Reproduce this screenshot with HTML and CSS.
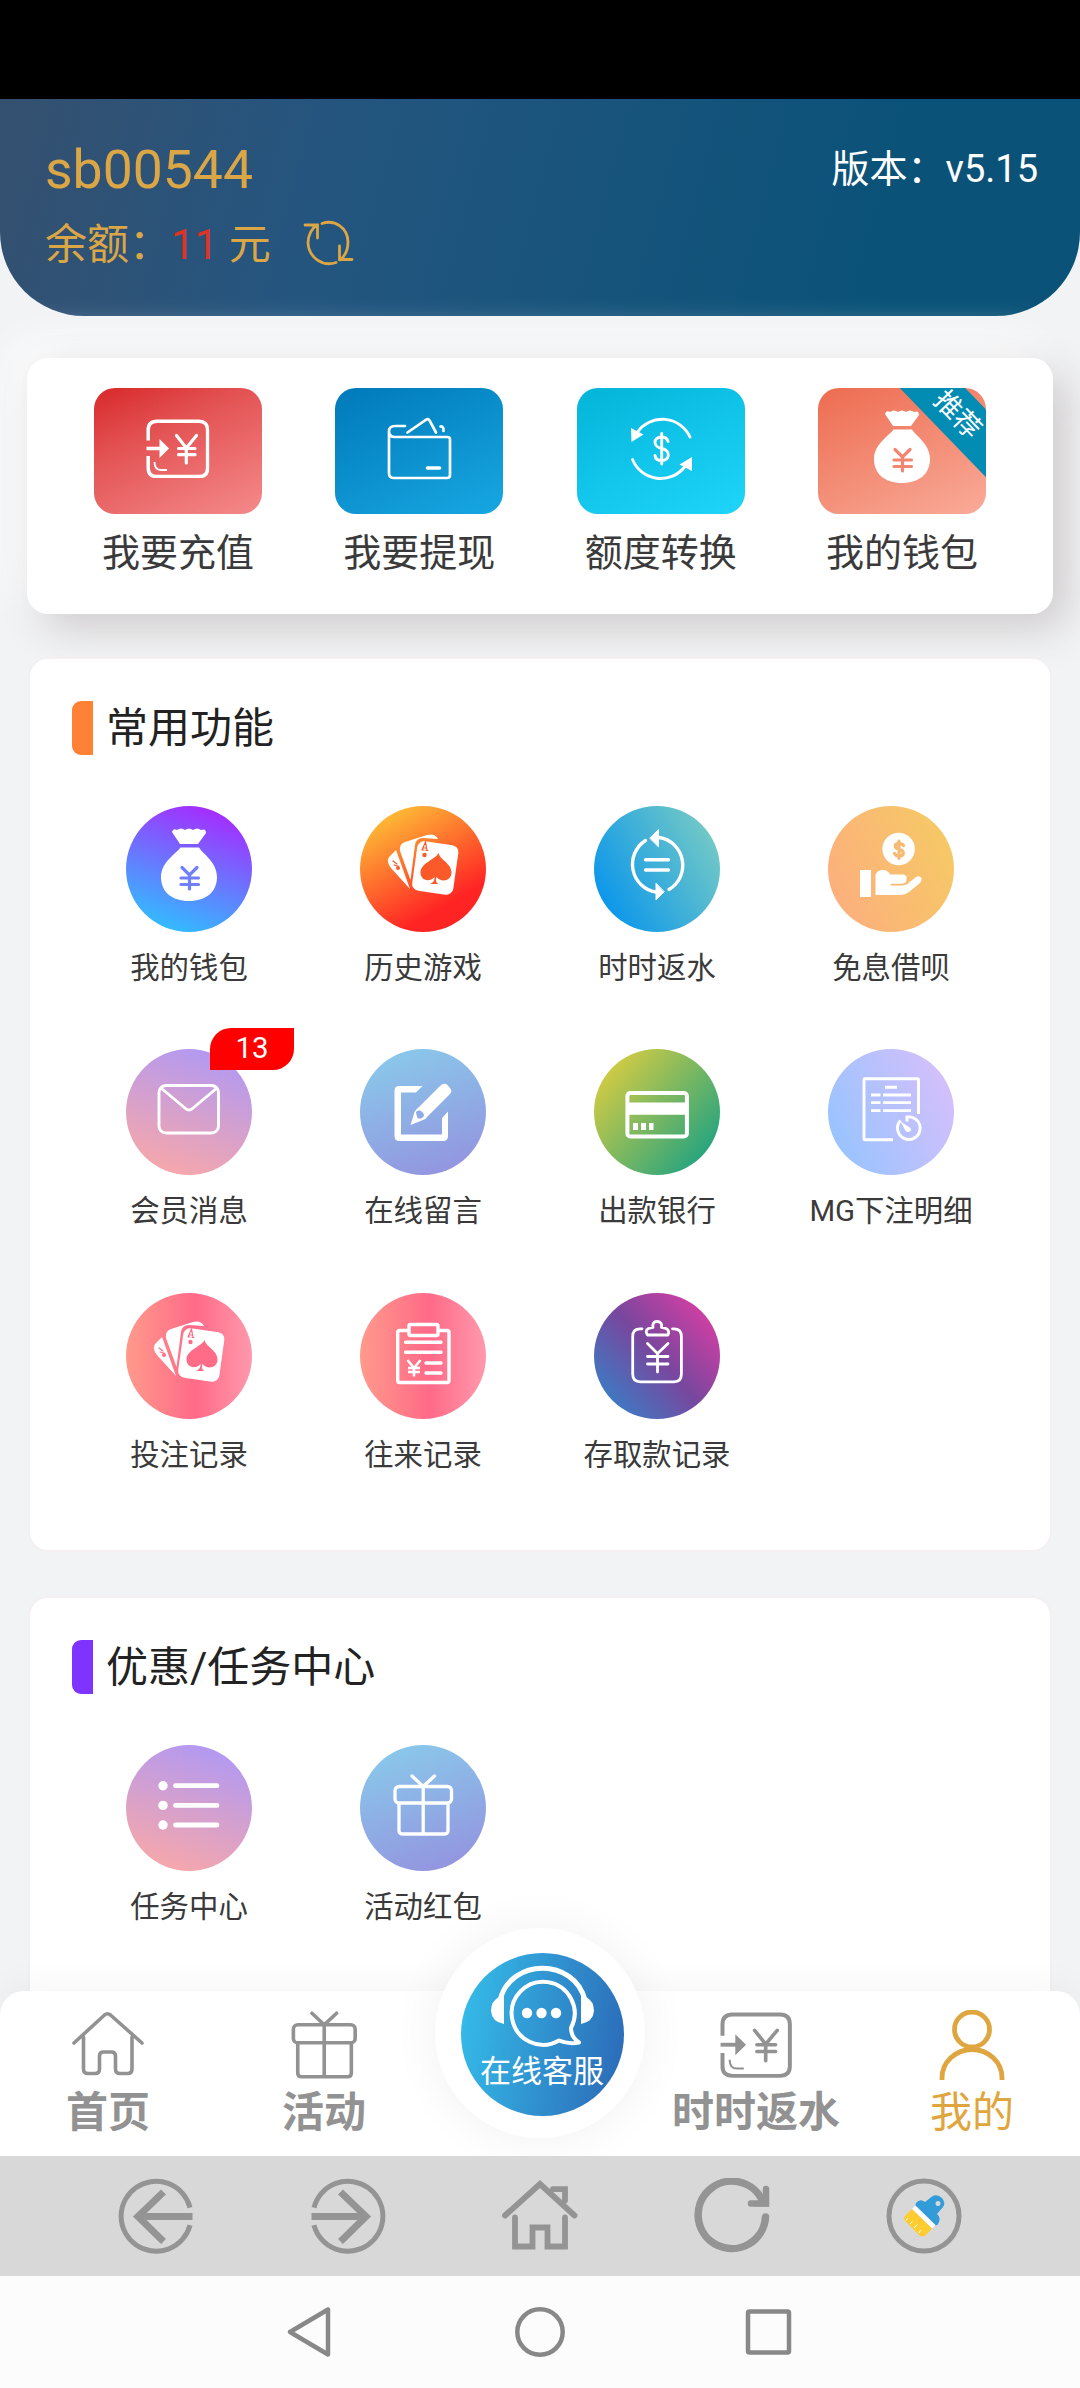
FILE: index.html
```html
<!DOCTYPE html>
<html lang="zh-CN">
<head>
<meta charset="utf-8">
<meta name="viewport" content="width=1080">
<title>我的</title>
<link rel="stylesheet" href="styles.css">
</head>
<body>
<svg class="sprite" aria-hidden="true">
  <defs>
    <symbol id="bag" viewBox="0 0 126 126">
      <path fill="#fff" d="M46 26Q47 22 51 24Q55 21 59 24Q63 21 67 24Q71 21 75 24Q80 22 80 27L72 38H54ZM54.500 41.500H73C76 47 91 56 91 71C91 86 80 95 63 95C46 95 35 86 35 71C35 56 51 47 54.500 41.500Z"/>
      <path class="cut-line" stroke-width="3.200" d="M56 61.500L63.500 69L71 61.500M63.500 69V83M55 72H72.500M55 78.500H72.500"/>
    </symbol>
    <symbol id="cards" viewBox="0 0 126 126">
      <path fill="#fff" d="M36 44L50 83L31 62Q26 56 29 51ZM40 45Q39 38 45 36L67 29Q75 27 78 33L63 32Q56 32 55 39L50.500 74Z"/>
      <rect fill="#fff" x="54.500" y="37" width="41.500" height="50" rx="7" transform="rotate(8 75.300 62)"/>
      <path class="cut" d="M78.500 47C76 53 61 57 60.500 66C60 74 69 77 74.500 71Q75 76 70 78H78.500Q74.500 76 76.500 71C81 77 92 75 91.500 66C91 57 80 54 78.500 47Z"/>
      <path class="cut-line" stroke-width="1.200" d="M62 44L65.500 36L67 44.500M63 42H66.500M62 44H64M66 44.500H68M33 55L37 58M34 59L38 60"/>
      <circle class="cut" cx="64.500" cy="49" r="2.200"/><circle class="cut" cx="38" cy="62" r="2"/>
    </symbol>
    <symbol id="gift" viewBox="32 28 62 64">
      <g fill="none" stroke="currentColor" stroke-width="3.300" stroke-linecap="round">
        <rect x="35" y="41.500" width="56.500" height="16.500" rx="4"/>
        <path d="M39 59V85.500Q39 89 42.500 89H84.500Q88 89 88 85.500V59M63.200 41.500V88.500M52 31L63.200 41.500L74.500 31"/>
      </g>
    </symbol>
    <symbol id="recharge" viewBox="52 31 63.500 59.500" preserveAspectRatio="none">
      <g fill="none" stroke="currentColor" stroke-width="3.500">
        <path d="M54.200 52.500V42Q54.200 33.200 63 33.200H105Q113.600 33.200 113.600 42V80Q113.600 88.600 105 88.600H63Q54.200 88.600 54.200 80V68"/>
        <path d="M52.500 60.500H68"/>
        <path stroke-linecap="round" stroke-width="3.200" d="M82.500 47.500L92.300 60L102.500 47.500M92.300 60V75M84.500 60.500H101M84.500 66.700H101"/>
        <path stroke-width="1.800" d="M60.500 74Q60.500 82 67 82H73"/>
      </g>
      <path fill="currentColor" d="M65.500 51L75 60.500L65.500 70Z"/>
    </symbol>
  </defs>
</svg>

<div class="app">
  <div class="status-bar"></div>

  <main class="content">
    <header class="profile">
      <div class="profile-row">
        <h1 class="username">sb00544</h1>
        <span class="version">版本：v5.15</span>
      </div>
      <div class="balance">
        <span>余额：<b class="amount">11</b> 元</span>
        <svg class="refresh" viewBox="0 0 52 46" fill="none" stroke="currentColor" stroke-width="2.800" stroke-linecap="round">
          <path d="M19 3.500C32 -1 45 8 45 22C45 30 42 36 37 40M33 42.500C20 47 6 38 5 23C5 15 9 8 14 5M2 5H14.500V18M49 39.500H36.500V26"/>
        </svg>
      </div>
    </header>

    <section class="quick">
      <a class="quick-item">
        <span class="tile tile-red"><svg class="recharge-icon"><use href="#recharge"/></svg></span>
        <span class="quick-label">我要充值</span>
      </a>
      <a class="quick-item">
        <span class="tile tile-blue">
          <svg viewBox="0 0 168 126" fill="none" stroke="#fff" stroke-width="2.700" stroke-linecap="round">
            <path d="M54 43V85Q54 90 59 90H112Q115 90 115 87V51.500Q115 49 112.500 49H60Q54 49 54 43.500Q54 38 60 38H70M72.500 44.500L91.500 31.500Q93.500 30.500 94.500 32.500L101 44.500M105.500 38.500Q108.800 38 108.500 43"/>
            <path stroke-width="3.600" d="M92.500 80H104.500"/>
          </svg>
        </span>
        <span class="quick-label">我要提现</span>
      </a>
      <a class="quick-item">
        <span class="tile tile-cyan">
          <svg viewBox="0 0 168 126" fill="none" stroke="#fff" stroke-width="2.900" stroke-linecap="round">
            <path d="M113 49A30.500 30.500 0 0 0 60.500 44M55.500 71.500A30.500 30.500 0 0 0 108 78.500"/>
            <path fill="#fff" stroke="none" d="M54 40L66.500 46.500L54.500 54ZM115 69V83L102.500 76.500Z"/>
            <path d="M91 53.500Q90 49 84.700 49C75.500 49 76 59 84.700 60.500C94 62 93 72.500 84.700 72.500Q78.500 72.500 78 67.500M84.700 45.500V76"/>
          </svg>
        </span>
        <span class="quick-label">额度转换</span>
      </a>
      <a class="quick-item">
        <span class="tile tile-coral">
          <svg class="cut-coral" viewBox="-21 0 168 126"><use href="#bag" width="126" height="126"/></svg>
          <span class="ribbon">推荐</span>
        </span>
        <span class="quick-label">我的钱包</span>
      </a>
    </section>

    <section class="panel">
      <h2 class="panel-title title-orange"><span>常用功能</span></h2>
      <div class="grid">
        <a class="item">
          <span class="dot g-violet"><svg><use href="#bag"/></svg></span>
          <span class="label">我的钱包</span>
        </a>
        <a class="item">
          <span class="dot g-fire"><svg><use href="#cards"/></svg></span>
          <span class="label">历史游戏</span>
        </a>
        <a class="item">
          <span class="dot g-teal">
            <svg viewBox="0 0 126 126" fill="none" stroke="#fff" stroke-width="3.400" stroke-linecap="round">
              <path d="M65 31.500A27.500 28 0 0 1 75 83.500M51.500 34.500A27.500 28 0 0 0 62 86M51.500 53.700H74.500M51.500 64H74.500"/>
              <path fill="#fff" stroke="#fff" stroke-width="1" stroke-linejoin="round" d="M56 32L64.500 23.500V40.500ZM62 77.500V94L70 86Z"/>
            </svg>
          </span>
          <span class="label">时时返水</span>
        </a>
        <a class="item">
          <span class="dot g-amber">
            <svg viewBox="0 0 126 126">
              <circle cx="70.600" cy="43" r="16.200" fill="#fff"/>
              <path fill="#fff" d="M32 64H43V91H32ZM47.500 89V69Q49 64 55 64Q60 64 62 68.500H75Q79 69 79.500 73L78 79L88 71Q91.500 69 93.500 72Q94 75 92 77L81 86Q77 89 73 89Z"/>
              <path class="cut-line" stroke-width="1.800" d="M63.500 78.700H74Q80 78.500 79.500 72"/>
              <path class="cut-line" stroke-width="3.200" d="M75.500 39.500Q74.500 37.500 71 37.500C66 37.500 66 42 71 43.200C77 44.500 76.500 50 71 50Q67.500 50 66.500 47.500M71 35V52.500"/>
            </svg>
          </span>
          <span class="label">免息借呗</span>
        </a>
        <a class="item">
          <span class="dot g-lilac">
            <svg viewBox="0 0 126 126" fill="none" stroke="#fff" stroke-width="2.900">
              <rect x="33" y="36.500" width="59.500" height="47.500" rx="7"/>
              <path d="M35 39L59.500 59.500Q63 62.500 66.500 59.500L91 39"/>
            </svg>
            <span class="badge">13</span>
          </span>
          <span class="label">会员消息</span>
        </a>
        <a class="item">
          <span class="dot g-sky">
            <svg viewBox="0 0 126 126">
              <path fill="#fff" d="M62.500 37L56 43.500H41V85.500H82V69L88 62.500V87Q88 92 83 92H39Q34.500 92 34.500 87V42Q34.500 37 39 37Z"/>
              <path fill="#fff" d="M50.500 76L54.500 63Q56 60 59 58L80 37Q84 33 87.500 36L90 39Q93 42 89.500 45.500L68 67Q66 70 63 71Z"/>
              <path class="cut" d="M56 64Q56 61 60 61.500Q64 63 64 67Q61 71 57.500 69Z"/>
            </svg>
          </span>
          <span class="label">在线留言</span>
        </a>
        <a class="item">
          <span class="dot g-green">
            <svg viewBox="0 0 126 126">
              <rect x="33.400" y="44" width="59.500" height="43.500" rx="3" fill="none" stroke="#fff" stroke-width="4"/>
              <path fill="#fff" d="M33 53.500H93V65.700H33ZM39 74H44V81H39ZM47 74H52V81H47ZM55 74H59.500V81H55Z"/>
            </svg>
          </span>
          <span class="label">出款银行</span>
        </a>
        <a class="item">
          <span class="dot g-mist">
            <svg viewBox="0 0 126 126" fill="none" stroke="#fff" stroke-width="2.900">
              <path d="M90.500 65V31Q90.500 29.800 89.500 29.800H37Q36 29.800 36 31V89.500Q36 90.800 37 90.800H65"/>
              <path d="M57 38.300H69M43 46H52.500M55 46H83M43 53.600H52.500M55 53.600H83M43 61.600H52.500M55 61.600H83"/>
              <path d="M72.500 71.500A11.300 11.300 0 1 0 79 68V72.500"/>
              <path fill="#fff" stroke="none" d="M72.500 72.500L82.500 79Q84 82 80.500 83Q78 83.500 77 81Z"/>
            </svg>
          </span>
          <span class="label">MG下注明细</span>
        </a>
        <a class="item">
          <span class="dot g-rose"><svg><use href="#cards"/></svg></span>
          <span class="label">投注记录</span>
        </a>
        <a class="item">
          <span class="dot g-rose">
            <svg viewBox="0 0 126 126" fill="none" stroke="#fff" stroke-width="3.400">
              <path d="M48 37.500H39.500Q37.700 37.500 37.700 39.500V87.500Q37.700 89.500 39.500 89.500H87Q89 89.500 89 87.500V39.500Q89 37.500 87 37.500H79"/>
              <rect x="49" y="31.500" width="29" height="11" rx="1.500"/>
              <path stroke-linecap="round" d="M45.500 49.300H81M45.500 59.300H81M66 70H81M66 80H81"/>
              <path stroke-width="2.600" d="M47.500 67L54 75L60.500 67M54 75V83.500M48 75H60M48 79H60"/>
            </svg>
          </span>
          <span class="label">往来记录</span>
        </a>
        <a class="item">
          <span class="dot g-purple">
            <svg viewBox="0 0 126 126" fill="none" stroke="#fff" stroke-width="2.800" stroke-linecap="round" stroke-linejoin="round">
              <path d="M48 35.800H46Q38.700 35.800 38.700 43.500V81Q38.700 88.800 46.500 88.800H80Q87.400 88.800 87.400 81V43.500Q87.400 35.800 80 35.800H78.500"/>
              <path d="M53.500 42H74Q76 37.500 72 35.500L67.500 34.500Q68.500 28.500 63 28.500Q58 28.500 59 34.500L54.500 35.500Q50.500 37.500 53.500 42Z"/>
              <path d="M53.500 50.500L63.500 60.500L74 50.500M63.500 60.500V79M53.500 63.500H74M53.500 71H74"/>
            </svg>
          </span>
          <span class="label">存取款记录</span>
        </a>
      </div>
    </section>

    <section class="panel">
      <h2 class="panel-title title-purple"><span>优惠/任务中心</span></h2>
      <div class="grid">
        <a class="item">
          <span class="dot g-lilac">
            <svg viewBox="0 0 126 126" stroke="#fff" fill="#fff" stroke-linecap="round">
              <path stroke-width="4.800" d="M49.500 40.700H91M49.500 60.400H91M49.500 80H91"/>
              <g stroke="none"><circle cx="37" cy="40.700" r="4.700"/><circle cx="37" cy="60.400" r="4.700"/><circle cx="37" cy="80" r="4.700"/></g>
            </svg>
          </span>
          <span class="label">任务中心</span>
        </a>
        <a class="item">
          <span class="dot g-sky"><svg class="dot-gift"><use href="#gift"/></svg></span>
          <span class="label">活动红包</span>
        </a>
      </div>
    </section>
  </main>

  <nav class="tabs">
    <a class="tab">
      <svg class="tab-icon" viewBox="0 0 72 70" fill="none" stroke="currentColor" stroke-width="3.600" stroke-linecap="round">
        <path d="M2 33L32.500 5Q35.500 2.500 38.500 5L70 33M11.500 27V59Q11.500 63.500 16 63.500H23Q27.500 63.500 27.500 59V46Q27.500 42 31.500 42H39.500Q43.500 42 43.500 46V59Q43.500 63.500 48 63.500H55.500Q60 63.500 60 59V27"/>
      </svg>
      <span class="tab-label">首页</span>
    </a>
    <a class="tab">
      <svg class="tab-icon"><use href="#gift"/></svg>
      <span class="tab-label">活动</span>
    </a>
    <a class="tab tab-service">
      <span class="service-ring">
        <span class="service">
          <svg class="service-icon" viewBox="0 0 164 164" fill="none" stroke="#fff" stroke-width="4">
            <path d="M39 47C50 4.500 113 4.500 124 47" stroke-width="5"/>
            <path fill="#fff" stroke="none" d="M43 39V71Q31 69 30 58Q30 48 38 44ZM120 39V71Q132 69 133 58Q133 48 125 44Z"/>
            <path stroke-linejoin="round" d="M98 87.500A31.500 31.500 0 1 1 110 75Q110 84 118 89.500Q107 91.500 98 87.500Z"/>
            <g fill="#fff" stroke="none"><circle cx="66" cy="60" r="5.200"/><circle cx="80.500" cy="60" r="5.200"/><circle cx="95" cy="60" r="5.200"/></g>
          </svg>
          <span class="service-text">在线客服</span>
        </span>
      </span>
    </a>
    <a class="tab">
      <svg class="tab-icon tab-recharge"><use href="#recharge"/></svg>
      <span class="tab-label">时时返水</span>
    </a>
    <a class="tab tab-active">
      <svg class="tab-icon" viewBox="0 0 72 70" fill="none" stroke="currentColor" stroke-width="4.800">
        <circle cx="36" cy="19.500" r="17.500"/><path d="M6 70V68A30 28.500 0 0 1 66 68V70"/>
      </svg>
      <span class="tab-label">我的</span>
    </a>
  </nav>

  <div class="toolbar">
    <svg viewBox="0 0 76 76" fill="none" stroke="currentColor" stroke-width="5">
      <path d="M72 29.500A35 35 0 1 0 72 47"/><path stroke-width="7" d="M45.500 14L20 38.500L45.500 63.500M20 38.500H74.500"/>
    </svg>
    <svg viewBox="0 0 76 76" fill="none" stroke="currentColor" stroke-width="5">
      <path d="M4 29.500A35 35 0 1 1 4 47"/><path stroke-width="7" d="M30.500 14L56 38.500L30.500 63.500M56 38.500H1.500"/>
    </svg>
    <svg viewBox="0 0 76 76" fill="none" stroke="currentColor" stroke-width="5.800" stroke-linecap="round">
      <path d="M3 37.500L38 6L72.500 37.500M13 39.500V68.500H30.500V49.500H45.500V68.500H63V39.500M51 11.200H63V22.500"/>
    </svg>
    <svg viewBox="0 0 76 76" fill="none" stroke="currentColor" stroke-width="7.500" stroke-linecap="round">
      <path d="M71.500 39A33.700 33.700 0 1 1 69 24"/><path stroke-width="6.500" d="M72 11V25.500H57"/><path fill="currentColor" stroke="none" d="M75 28.500H60L75 12Z"/>
    </svg>
    <svg viewBox="0 0 76 76">
      <circle cx="38" cy="38" r="35" fill="none" stroke="currentColor" stroke-width="5"/>
      <path fill="#329bd8" d="M30 25Q34 20 39 24L46 18.500Q51 15.500 56 20Q60 25 57 29L51 36Q56 40 51.500 47L48 47.500L29 29Z"/>
      <circle cx="52" cy="25.500" r="2.500" fill="#d8d8d8"/>
      <path fill="#fff" d="M29.500 27.500L49.500 47L46 50.500L26 31Z"/>
      <path fill="#ffcc32" d="M26 31L46 50.500L40 57Q36.500 60 33 57L19 43Q17 40 19 38Z"/>
      <path fill="none" stroke="#fff" stroke-width="1" d="M20 42L22 40.500M24 46L26.500 43.500M28 50L31 46.500M33 55L34.500 52"/>
    </svg>
  </div>

  <div class="sysbar">
    <svg viewBox="0 0 56 56" fill="none" stroke="currentColor" stroke-width="4.500" stroke-linejoin="round">
      <path d="M45 5.500V50.500L7 28Z"/>
    </svg>
    <svg viewBox="0 0 56 56" fill="none" stroke="currentColor" stroke-width="4.500"><circle cx="28" cy="28" r="22.700"/></svg>
    <svg viewBox="0 0 56 56" fill="none" stroke="currentColor" stroke-width="4.500"><rect x="7" y="7.500" width="41" height="41" rx="1.500"/></svg>
  </div>
</div>
</body>
</html>
```

FILE: styles.css
```css
* { box-sizing: border-box; margin: 0; padding: 0; }

body {
  width: 1080px;
  background: #f2f3f5;
  font-family: Roboto, "Noto Sans CJK SC", sans-serif;
  color: #3a3a3a;
}

svg { display: block; }
.sprite { position: absolute; width: 0; height: 0; }

.app {
  display: flex;
  flex-direction: column;
  height: 2388px;
  overflow: hidden;
}

.status-bar { flex: none; height: 99px; background: #000; }

.content { flex: 1; min-height: 0; overflow: hidden; }

/* Profile header */
.profile {
  height: 217px;
  padding: 39px 42px 0 45px;
  border-radius: 0 0 84px 84px;
  background: linear-gradient(105deg, #35506f 0%, #24557f 30%, #0a5278 82%, #0a5278 100%);
  color: #dba646;
}
.profile-row { display: flex; justify-content: space-between; align-items: flex-start; }
.username { font-size: 53.5px; font-weight: 400; line-height: 64px; }
.version { font-size: 38px; line-height: 62px; color: #fff; }
.balance { display: flex; align-items: center; gap: 32px; margin-top: 10px; font-size: 42px; line-height: 66px; }
.amount { font-weight: 400; color: #dc3528; }
.refresh { width: 52px; height: 46px; margin-bottom: 4px; }

/* Quick actions */
.quick {
  display: grid;
  grid-template-columns: repeat(4, 241.4px);
  justify-content: center;
  height: 256px;
  margin: 42px 27px 0;
  padding-top: 30px;
  border-radius: 21px;
  background: #fff;
  box-shadow: 15px 15px 40px #cfcccd, -15px -15px 40px #fdfdfd;
}
.quick-item { display: flex; flex-direction: column; align-items: center; gap: 11px; }
.tile {
  position: relative;
  display: flex;
  align-items: center;
  justify-content: center;
  width: 168px;
  height: 126px;
  border-radius: 21px;
  overflow: hidden;
  color: #fff;
}
.tile svg { width: 168px; height: 126px; }
.tile .recharge-icon { width: 63.5px; height: 59.5px; margin-bottom: 5px; }
.tile-red { background: linear-gradient(155deg, #d8282a, #e35253 35%, #f58a8b); }
.tile-blue { background: linear-gradient(155deg, #0079b9, #17a7e2); }
.tile-cyan { background: linear-gradient(155deg, #04b4d9, #1fd5fa); }
.tile-coral { background: linear-gradient(155deg, #ed6c50, #f9ab99); }
.ribbon {
  position: absolute;
  left: 42px;
  top: 4.5px;
  width: 200px;
  height: 47px;
  padding-right: 6px;
  transform: rotate(46deg);
  background: #028bb3;
  font-size: 27px;
  line-height: 48px;
  text-align: center;
}
.quick-label { font-size: 38px; line-height: 56px; white-space: nowrap; }

/* Panels */
.panel {
  height: 895px;
  margin: 43px 28px 0;
  padding: 42px 42px 0;
  border: 2px solid #f4f0f1;
  border-radius: 20px;
  background: #fff;
}
.panel + .panel { margin-top: 44px; }
.panel-title {
  display: flex;
  align-items: center;
  gap: 13px;
  height: 54px;
  font-size: 42px;
  font-weight: 400;
  line-height: 54px;
  color: #222;
}
.panel-title span { padding-top: 2px; }
.panel-title::before { content: ""; width: 21px; height: 54px; border-radius: 9px 0 0 9px; }
.title-orange::before { background: #ff8136; }
.title-purple::before { background: #7e33ff; }
.grid {
  display: grid;
  grid-template-columns: repeat(4, 234px);
  grid-template-rows: 243px 244px;
  margin-top: 51px;
}
.item { display: flex; flex-direction: column; align-items: center; gap: 14px; }
.dot { position: relative; width: 126px; height: 126px; border-radius: 50%; color: #fff; }
.dot svg { width: 126px; height: 126px; }
.dot .dot-gift { width: 62px; height: 64px; margin: 28px 0 0 32px; }
.label { font-size: 29.4px; line-height: 44px; white-space: nowrap; }
.badge {
  position: absolute;
  left: 84px;
  top: -21px;
  width: 84px;
  height: 42px;
  border-radius: 21px 0 21px 0;
  background: #f00;
  font-size: 29.4px;
  line-height: 41px;
  text-align: center;
}

.cut { fill: var(--cut); }
.cut-line { fill: none; stroke: var(--cut); stroke-linecap: round; }
.cut-coral { --cut: #f28670; }

.g-violet { --cut: #6f80fa; background: linear-gradient(200deg, #a52cff 10%, #2bc5ff 95%); }
.g-fire { --cut: #fa5a2a; background: linear-gradient(150deg, #fdcb38 5%, #ff2424 75%); }
.g-teal { background: linear-gradient(60deg, #0895ec 10%, #75cac5 90%); }
.g-amber { --cut: #f8ba70; background: linear-gradient(65deg, #fdac80, #f5cc62); }
.g-lilac { background: linear-gradient(200deg, #b299f2 10%, #f6a7ab 90%); }
.g-sky { --cut: #8eace6; background: linear-gradient(160deg, #8ac7ea 10%, #9394df 92%); }
.g-green { background: linear-gradient(130deg, #e3cf3d 5%, #14a085 95%); }
.g-mist { background: linear-gradient(65deg, #94c4ff 5%, #d8bffb 95%); }
.g-rose { --cut: #ff6c88; background: linear-gradient(90deg, #ff9a8b 0%, #ff6a88 55%, #ff99ac 100%); }
.g-purple { background: linear-gradient(48deg, #2a8bd0 0%, #78479e 50%, #ee3ca5 100%); }

/* Bottom tabs */
.tabs {
  position: relative;
  flex: none;
  display: grid;
  grid-template-columns: repeat(5, 216px);
  height: 165px;
  margin-top: -24px;
  border-radius: 24px 24px 0 0;
  background: #fff;
  box-shadow: 0 0 40px rgba(0, 0, 0, 0.05);
  color: #929292;
}
.tab { display: flex; flex-direction: column; align-items: center; padding-top: 19px; }
.tab-icon { width: 72px; height: 70px; }
.tab-recharge { height: 66px; margin: 2px 0; }
.tab-label { font-size: 42px; font-weight: 700; line-height: 66px; white-space: nowrap; }
.tab-active { color: #dfa640; }
.tab-active .tab-label { font-weight: 400; }
.service-ring {
  position: absolute;
  left: 435px;
  top: -63px;
  width: 210px;
  height: 210px;
  padding: 25px 0 0 26px;
  border-radius: 50%;
  background: #fff;
  box-shadow: 0 0 50px rgba(0, 0, 0, 0.06);
}
.service {
  position: relative;
  display: block;
  width: 163px;
  height: 163px;
  border-radius: 50%;
  background: linear-gradient(100deg, #35bbe8 5%, #2c70bb 90%);
  color: #fff;
}
.service-icon { width: 164px; height: 164px; }
.service-text {
  position: absolute;
  left: 0;
  top: 97px;
  width: 162px;
  font-size: 31px;
  line-height: 44px;
  text-align: center;
  white-space: nowrap;
}

/* Browser toolbar */
.toolbar {
  position: relative;
  flex: none;
  display: grid;
  grid-template-columns: repeat(5, 192px);
  place-content: center;
  justify-items: center;
  height: 120px;
  background: #d8d8d8;
  color: #949494;
}
.toolbar svg { width: 76px; height: 76px; }

/* System navigation */
.sysbar {
  flex: none;
  display: flex;
  align-items: center;
  justify-content: center;
  gap: 173px;
  height: 112px;
  background: #fcfcfc;
  color: #888;
}
.sysbar svg { width: 56px; height: 56px; }
```
